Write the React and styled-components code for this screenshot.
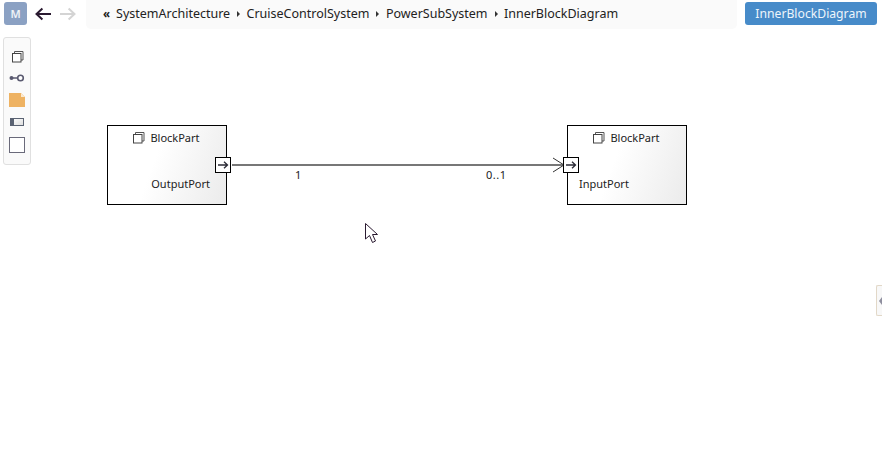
import React from 'react';
import styled, { createGlobalStyle } from 'styled-components';

const GlobalStyle = createGlobalStyle`
    html, body {
        margin: 0;
        padding: 0;
        background: #fff;
        overflow: hidden;
    }

    body {
        font-family: "Noto Sans", "Liberation Sans", sans-serif;
        color: #222;
    }
`;

const Page = styled.div`
    position: relative;
    width: 882px;
    height: 475px;
    overflow: hidden;
`;

const Header = styled.header`
    display: flex;
    align-items: flex-start;
    height: 29px;
    padding-left: 4px;
`;

const Avatar = styled.div`
    flex: none;
    display: flex;
    align-items: center;
    justify-content: center;
    width: 23px;
    height: 23px;
    margin-top: 2px;
    border-radius: 3px;
    background: #8ba1c3;
    color: #eef2f7;
    font-size: 11px;
    font-weight: 600;
`;

const ArrowButton = styled.button`
    flex: none;
    display: flex;
    width: 16px;
    height: 16px;
    margin: 6px 0 0 ${({ $gap }) => $gap}px;
    padding: 0;
    border: 0;
    background: none;
    color: ${({ $disabled }) => ($disabled ? '#d4d4d4' : '#2a1a30')};
`;

const Breadcrumbs = styled.nav`
    flex: none;
    display: flex;
    align-items: center;
    width: 651px;
    height: 29px;
    margin-left: 10px;
    padding: 0 0 2px 17px;
    box-sizing: border-box;
    border-radius: 0 0 5px 5px;
    background: #fafafa;
    font-size: 12.5px;
`;

const Crumb = styled.span`
    color: #222;
    white-space: nowrap;
`;

const Caret = styled.span`
    width: 0;
    height: 0;
    margin: 1px 6.4px 0 7px;
    border-style: solid;
    border-width: 3px 0 3px 3px;
    border-color: transparent transparent transparent #333;
`;

const Back = styled.span`
    margin-right: 6px;
    font-size: 11.5px;
    font-weight: 700;
    line-height: 1;
`;

const DiagramButton = styled.button`
    flex: none;
    width: 132px;
    height: 23px;
    margin: 2px 0 0 8px;
    padding: 0 0 1px;
    border: 0;
    border-radius: 3px;
    background: #478bc9;
    color: #eef5fb;
    font-family: inherit;
    font-size: 12.2px;
`;

const Palette = styled.aside`
    position: absolute;
    top: 37px;
    left: 3px;
    display: flex;
    flex-direction: column;
    align-items: center;
    width: 28px;
    height: 128px;
    padding-top: 12px;
    box-sizing: border-box;
    gap: 11px;
    border: 1px solid #e0e0e0;
    border-radius: 3px;
    background: #fafafa;
`;

const PaletteIcon = styled.svg`
    display: block;
    flex: none;
`;

const Block = styled.div`
    position: absolute;
    top: 125px;
    left: ${({ $left }) => $left}px;
    width: 120px;
    height: 80px;
    box-sizing: border-box;
    border: 1px solid #000;
    background: linear-gradient(110deg, #fff 40%, #ebebeb 100%);
    font-size: 11px;
`;

const BlockTitle = styled.div`
    display: flex;
    align-items: center;
    justify-content: center;
    gap: 5px;
    height: 14px;
    margin: 4px 2px 0 0;
    color: #222;
`;

const PortLabel = styled.div`
    margin-top: 32px;
    padding: 0 16px 0 ${({ $side }) => ($side === 'left' ? '11px' : '0')};
    text-align: ${({ $side }) => $side};
    color: #222;
    line-height: 15px;
`;

const Port = styled.div`
    position: absolute;
    top: 31px;
    ${({ $side }) => ($side === 'right' ? 'right: -5px;' : 'left: -5px;')}
    display: flex;
    align-items: center;
    justify-content: center;
    width: 16px;
    height: 16px;
    box-sizing: border-box;
    border: 1px solid #000;
    background: #fff;
`;

const Connector = styled.svg`
    position: absolute;
    top: 155px;
    left: 231px;
`;

const Multiplicity = styled.span`
    position: absolute;
    top: 167px;
    left: ${({ $left }) => $left}px;
    color: #222;
    font-size: 11px;
    letter-spacing: 0.5px;
    line-height: 15px;
`;

const Pointer = styled.svg`
    position: absolute;
    top: 223px;
    left: 365px;
`;

const SideHandle = styled.div`
    position: absolute;
    top: 285px;
    right: 0;
    display: flex;
    align-items: center;
    width: 6px;
    height: 31px;
    padding-left: 2px;
    box-sizing: border-box;
    border: 1px solid #e2d8c8;
    border-right: 0;
    border-radius: 2px 0 0 2px;
    background: #f8f8f8;

    &::before {
        content: '';
        border-style: solid;
        border-width: 4px 3px 4px 0;
        border-color: transparent #8f8f9f transparent transparent;
    }
`;

const BlockGlyph = () => (
    <PaletteIcon width="13" height="13" viewBox="0 0 13 13">
        <path d="M3.5 3V1.5H12V10H10" fill="none" stroke="#555" />
        <rect x="1.5" y="3.5" width="8.5" height="8.5" fill="#fff" stroke="#444" />
    </PaletteIcon>
);

const PortArrow = () => (
    <svg width="12" height="10" viewBox="0 0 12 10">
        <path d="M1 5H10.5M7 1.8L10.5 5L7 8.2" fill="none" stroke="#2a2a35" strokeWidth="1.3" />
    </svg>
);

const NavArrow = ({ flip }) => (
    <svg width="16" height="16" viewBox="0 0 16 16" style={flip ? { transform: 'scaleX(-1)' } : undefined}>
        <path d="M16 8H1.5M7.4 2.4L1.5 8L7.4 13.6" fill="none" stroke="currentColor" strokeWidth="2" />
    </svg>
);

const crumbs = ['SystemArchitecture', 'CruiseControlSystem', 'PowerSubSystem', 'InnerBlockDiagram'];

const App = () => (
    <Page>
        <GlobalStyle />

        <Header>
            <Avatar>M</Avatar>
            <ArrowButton $gap={8}><NavArrow /></ArrowButton>
            <ArrowButton $gap={9} $disabled><NavArrow flip /></ArrowButton>
            <Breadcrumbs>
                <Back>«</Back>
                {crumbs.map((crumb, i) => (
                    <React.Fragment key={crumb}>
                        {i > 0 && <Caret />}
                        <Crumb>{crumb}</Crumb>
                    </React.Fragment>
                ))}
            </Breadcrumbs>
            <DiagramButton>InnerBlockDiagram</DiagramButton>
        </Header>

        <Palette>
            <BlockGlyph />
            <PaletteIcon width="16" height="8" viewBox="0 0 16 8">
                <circle cx="2.5" cy="4" r="2" fill="#5a5a70" />
                <path d="M4 4H9" stroke="#5a5a70" strokeWidth="1.5" />
                <circle cx="11.5" cy="4" r="2.8" fill="#fff" stroke="#5a5a70" strokeWidth="1.6" />
            </PaletteIcon>
            <PaletteIcon width="16" height="14" viewBox="0 0 16 14">
                <path d="M0 0H12L16 4V14H0Z" fill="#eeb262" />
                <path d="M12 0L16 4H12Z" fill="#fbe9cf" />
            </PaletteIcon>
            <PaletteIcon width="14" height="8" viewBox="0 0 14 8">
                <defs>
                    <linearGradient id="slotFill" x1="0" y1="0" x2="1" y2="1">
                        <stop offset="0" stopColor="#fff" />
                        <stop offset="1" stopColor="#ddd" />
                    </linearGradient>
                </defs>
                <rect x="0.5" y="0.5" width="13" height="7" fill="url(#slotFill)" stroke="#5a6272" />
                <rect x="0" y="0" width="4" height="8" fill="#5a6272" />
            </PaletteIcon>
            <PaletteIcon width="16" height="16" viewBox="0 0 16 16">
                <rect x="0.5" y="0.5" width="15" height="15" fill="#fff" stroke="#6a6a7a" />
            </PaletteIcon>
        </Palette>

        <Connector width="336" height="20" viewBox="0 0 336 20">
            <path d="M1 10H332" stroke="#777" strokeWidth="2" />
            <path d="M322 3L333 10L322 17" fill="none" stroke="#333" strokeWidth="1" />
        </Connector>

        <Block $left={107}>
            <BlockTitle><BlockGlyph />BlockPart</BlockTitle>
            <PortLabel $side="right">OutputPort</PortLabel>
            <Port $side="right"><PortArrow /></Port>
        </Block>

        <Block $left={567}>
            <BlockTitle><BlockGlyph />BlockPart</BlockTitle>
            <PortLabel $side="left">InputPort</PortLabel>
            <Port $side="left"><PortArrow /></Port>
        </Block>

        <Multiplicity $left={295}>1</Multiplicity>
        <Multiplicity $left={486}>0..1</Multiplicity>

        <Pointer width="14" height="21" viewBox="0 0 14 21">
            <path d="M0.5 0.5V16L4.5 12.5L7.5 19.5L10.5 18L7.5 11.5H12.5Z" fill="#fff" stroke="#2a1a30" strokeWidth="1" />
        </Pointer>

        <SideHandle />
    </Page>
);

export default App;
